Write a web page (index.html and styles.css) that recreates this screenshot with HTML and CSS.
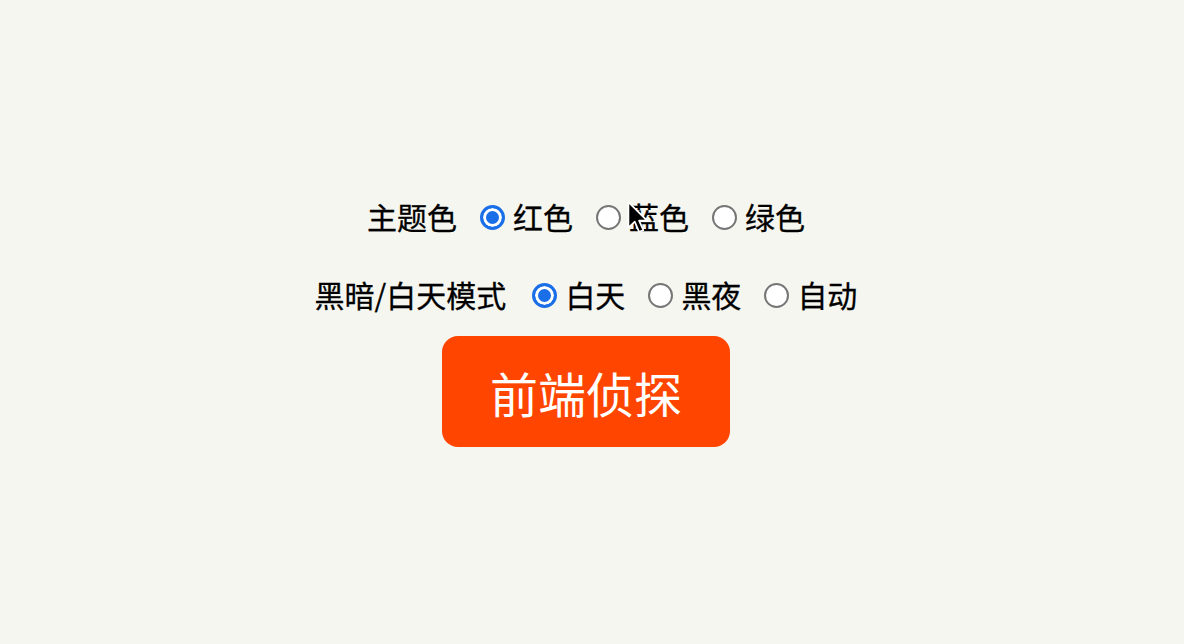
FILE: index.html
```html
<!DOCTYPE html>
<html lang="zh-CN">
<head>
<meta charset="utf-8">
<title>前端侦探</title>
<link rel="stylesheet" href="styles.css">
</head>
<body>
<main class="page">
  <div class="row row-theme">
    <span class="label">主题色</span>
    <label class="opt"><span class="radio checked"></span><span>红色</span></label>
    <label class="opt"><span class="radio"></span><span>蓝色</span></label>
    <label class="opt"><span class="radio"></span><span>绿色</span></label>
  </div>
  <div class="row row-mode">
    <span class="label">黑暗/白天模式</span>
    <label class="opt"><span class="radio checked"></span><span>白天</span></label>
    <label class="opt"><span class="radio"></span><span>黑夜</span></label>
    <label class="opt"><span class="radio"></span><span>自动</span></label>
  </div>
  <button class="btn">前端侦探</button>
</main>
<svg class="cursor" width="22" height="34" viewBox="0 0 20 32">
  <path d="M1 1 L1 25 L7 19.5 L11 29 L15 27.5 L11 18.5 L18.5 18.5 Z" fill="#000" stroke="#fff" stroke-width="1.6" stroke-linejoin="round"/>
</svg>
</body>
</html>
```
FILE: styles.css
```css
html, body {
  margin: 0;
  padding: 0;
  background: #f6f6f0;
}
body {
  width: 1184px;
  height: 644px;
  overflow: hidden;
  position: relative;
  font-family: "Noto Sans CJK SC", "Noto Sans", sans-serif;
  color: #000;
}
.page {
  display: flex;
  flex-direction: column;
  align-items: center;
  padding-top: 193px;
  padding-right: 12px;
}
.row {
  display: flex;
  align-items: center;
  height: 46px;
  font-size: 30px;
  font-weight: 400;
  line-height: 46px;
  -webkit-text-stroke: 0.3px #000;
}
.row-mode {
  margin-top: 32px;
}
.label {
  margin-right: 23px;
}
.row-mode .label {
  margin-right: 26px;
}
.opt {
  display: flex;
  align-items: center;
  margin-right: 23px;
}
.opt:last-child {
  margin-right: 0;
}
.radio {
  box-sizing: border-box;
  width: 25px;
  height: 25px;
  border-radius: 50%;
  border: 2px solid #767676;
  background: #fff;
  margin-right: 8px;
  position: relative;
  top: 1px;
  -webkit-text-stroke: 0;
}
.radio.checked {
  border: 3px solid #1a6fe8;
  background: #1a6fe8;
  box-shadow: inset 0 0 0 3px #fff;
}
.btn {
  margin-top: 19px;
  width: 288px;
  height: 111px;
  border: none;
  border-radius: 16px;
  background: #ff4500;
  color: #fff;
  font-family: "Noto Sans CJK SC", "Noto Sans", sans-serif;
  font-size: 48px;
  font-weight: 400;
  padding: 0;
}
.cursor {
  position: absolute;
  left: 627px;
  top: 201px;
}
```
